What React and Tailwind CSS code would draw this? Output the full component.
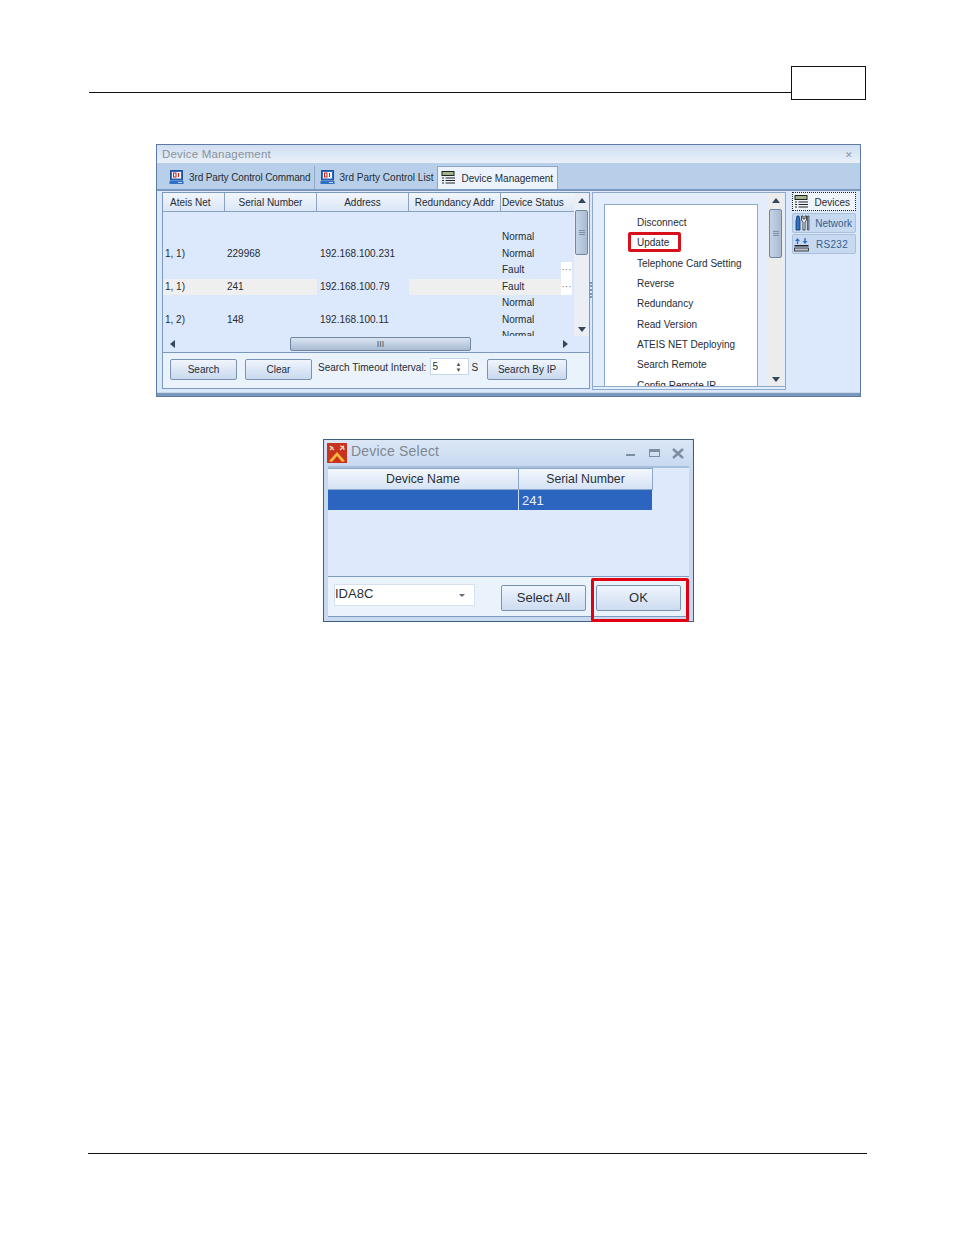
import React from 'react';

const rows = [
  { status: 'Normal' },
  { net: '1, 1)', serial: '229968', address: '192.168.100.231', status: 'Normal' },
  { status: 'Fault', dots: true },
  { net: '1, 1)', serial: '241', address: '192.168.100.79', status: 'Fault', dots: true, shaded: true },
  { status: 'Normal' },
  { net: '1, 2)', serial: '148', address: '192.168.100.11', status: 'Normal' },
  { status: 'Normal' },
];

const actions = ['Disconnect', 'Update', 'Telephone Card Setting', 'Reverse', 'Redundancy', 'Read Version', 'ATEIS NET Deploying', 'Search Remote', 'Config Remote IP'];

const ControlIcon = () => (
  <svg width="15" height="15" viewBox="0 0 15 15" className="shrink-0">
    <rect x="1.5" y="0.5" width="12" height="9.5" fill="#2f6fc4" stroke="#1c4f96" />
    <rect x="3" y="2" width="9" height="6.5" fill="#f4f4f4" />
    <rect x="4.5" y="3" width="2.5" height="4" fill="none" stroke="#d02020" />
    <rect x="9" y="3" width="1" height="4" fill="#d02020" />
    <rect x="0.5" y="11" width="14" height="3" fill="#2f6fc4" />
    <rect x="9" y="12" width="4" height="1" fill="#bcd6f5" />
  </svg>
);

const ListIcon = () => (
  <svg width="15" height="15" viewBox="0 0 15 15" className="shrink-0">
    <rect x="1" y="0.5" width="12" height="4" fill="#9fb48c" stroke="#222" />
    <path d="M1 7h2M1 9.5h2M1 12h2" stroke="#222" strokeWidth="1.2" />
    <path d="M4.5 7H14M4.5 9.5H14M4.5 12H14" stroke="#222" strokeWidth="1.2" />
  </svg>
);

const ToolsIcon = () => (
  <svg width="15" height="16" viewBox="0 0 15 16" className="shrink-0">
    <path d="M1 15V6L2 1h2l1 5v9z" fill="#2f6fc4" stroke="#12365f" strokeWidth="0.8" />
    <path d="M8 15V7L6.5 5V1h1.5v3h2V1h1.5v4L10 7v8z" fill="#eef3fa" stroke="#222" strokeWidth="0.8" />
    <path d="M12.5 1h1.5v14h-1.5z" fill="#9ab" stroke="#222" strokeWidth="0.6" />
  </svg>
);

const SerialIcon = () => (
  <svg width="15" height="15" viewBox="0 0 15 15" className="shrink-0">
    <path d="M3.5 1L1 4h1.8v3h1.4V4H6z" fill="#2f6fc4" />
    <path d="M11 7L8.5 4h1.8V1h1.4v3h1.8z" fill="#2f6fc4" />
    <rect x="0.5" y="8" width="14" height="1.5" fill="#222" />
    <rect x="0.5" y="11" width="14" height="3" fill="#b8c4d0" stroke="#222" strokeWidth="0.8" />
  </svg>
);

const Arrow = ({ dir }) => {
  const shapes = {
    up: 'border-x-[4px] border-b-[5px] border-x-transparent border-b-[#33475f]',
    down: 'border-x-[4px] border-t-[5px] border-x-transparent border-t-[#33475f]',
    left: 'border-y-[4px] border-r-[5px] border-y-transparent border-r-[#33475f]',
    right: 'border-y-[4px] border-l-[5px] border-y-transparent border-l-[#33475f]',
  };
  return <div className={`w-0 h-0 shrink-0 ${shapes[dir]}`} />;
};

const Grip = () => (
  <div className="flex flex-col gap-[1px]">
    <div className="w-[6px] h-[1px] bg-[#7f8fa5]" />
    <div className="w-[6px] h-[1px] bg-[#7f8fa5]" />
    <div className="w-[6px] h-[1px] bg-[#7f8fa5]" />
  </div>
);

const VScroll = ({ thumb, track }) => (
  <div className={`w-[15px] shrink-0 flex flex-col items-center ${track}`}>
    <div className="h-[15px] flex items-center justify-center shrink-0"><Arrow dir="up" /></div>
    <div className={`w-[13px] ${thumb} shrink-0 rounded-[2px] border border-[#71879f] bg-gradient-to-r from-[#c5d3e6] to-[#a9bbd2] flex items-center justify-center`}>
      <Grip />
    </div>
    <div className="flex-1" />
    <div className="h-[14px] flex items-center justify-center shrink-0"><Arrow dir="down" /></div>
  </div>
);

const SmallButton = ({ children, className }) => (
  <div className={`h-[21px] rounded-[2px] border border-[#7b93b3] bg-gradient-to-b from-[#f0f5fc] to-[#c9d9ef] flex items-center justify-center ${className}`}>
    {children}
  </div>
);

const TableRow = ({ row }) => (
  <div className="flex h-[16.5px] items-center leading-none">
    <div className={`w-[62px] h-full flex items-center pl-[2px] ${row.shaded ? 'bg-[#efefef]' : ''}`}>{row.net}</div>
    <div className={`w-[92px] h-full flex items-center pl-[2px] ${row.shaded ? 'bg-[#efefef]' : ''}`}>{row.serial}</div>
    <div className="w-[92px] h-full flex items-center pl-[3px]">{row.address}</div>
    <div className={`w-[92px] h-full ${row.shaded ? 'bg-[#efefef]' : ''}`} />
    <div className={`w-[60px] h-full flex items-center pl-[1px] ${row.shaded ? 'bg-[#efefef]' : ''}`}>{row.status}</div>
    <div className={`w-[11px] h-full flex items-center justify-center text-[#777] ${row.dots ? 'bg-white' : ''}`}>{row.dots ? '···' : ''}</div>
  </div>
);

const HeaderCell = ({ children, className }) => (
  <div className={`h-full flex items-center border-r border-[#8aa3c4] whitespace-nowrap overflow-hidden ${className}`}>
    {children}
  </div>
);

const DeviceManagement = () => (
  <div className="ml-[156px] mt-[44px] w-[705px] h-[253px] border border-[#5d7ba3] bg-[#dce8fb] flex flex-col text-[#262c34] text-[10px] font-['Liberation_Sans',sans-serif]">
    <div className="h-[18px] shrink-0 pl-[5px] pr-[5px] pt-[2px] flex items-center justify-between bg-gradient-to-b from-[#cfdff2] to-[#e9f0fa] text-[#8a929c] text-[11.5px] tracking-[0.2px]">
      <span>Device Management</span>
      <span className="text-[9px] leading-none mr-[2px]">✕</span>
    </div>
    <div className="h-[26px] shrink-0 bg-[#b8cfe9] pl-[12px] flex items-end">
      <div className="h-[23px] flex items-center gap-[5px] pr-[3px] border-r border-[#8ea6c4]">
        <ControlIcon /><span className="tracking-[-0.12px] whitespace-nowrap">3rd Party Control Command</span>
      </div>
      <div className="h-[23px] flex items-center gap-[5px] pl-[5px] pr-[4px]">
        <ControlIcon /><span className="whitespace-nowrap">3rd Party Control List</span>
      </div>
      <div className="h-[23px] w-[121px] flex items-center gap-[5px] pl-[3px] bg-[#edf3fc] border-x border-t border-[#8ea6c4]">
        <ListIcon /><span className="whitespace-nowrap">Device Management</span>
      </div>
    </div>
    <div className="h-[2px] shrink-0 bg-[#7c98bd]" />
    <div className="flex-1 min-h-0 flex pl-[5px] pt-[1px] bg-[#dce8fb]">
      <div className="w-[428px] h-[197px] border border-[#7b98be] flex flex-col bg-[#dce8fb]">
        <div className="flex-1 min-h-0 flex">
          <div className="flex-1 min-w-0 flex flex-col overflow-hidden">
            <div className="h-[19px] shrink-0 flex border-b border-[#8aa3c4] bg-gradient-to-b from-[#f2f6fc] to-[#dbe6f6]">
              <HeaderCell className="w-[62px] pl-[7px]">Ateis Net</HeaderCell>
              <HeaderCell className="w-[92px] justify-center">Serial Number</HeaderCell>
              <HeaderCell className="w-[92px] justify-center">Address</HeaderCell>
              <HeaderCell className="w-[92px] justify-center">Redundancy Addr</HeaderCell>
              <HeaderCell className="w-[71px] pl-[1px] border-r-0">Device Status</HeaderCell>
            </div>
            <div className="pt-[17px]">
              {rows.map((row, i) => <TableRow key={i} row={row} />)}
            </div>
          </div>
          <VScroll thumb="h-[45px] mt-[2px]" track="bg-[#ebeff5]" />
        </div>
        <div className="h-[16px] shrink-0 flex items-center pl-[7px] pr-[21px]">
          <Arrow dir="left" />
          <div className="ml-[115px] w-[181px] h-[14px] rounded-[2px] border border-[#71879f] bg-gradient-to-b from-[#dbe5f2] to-[#a9bbd2] flex items-center justify-center text-[#555] text-[9px] leading-none">III</div>
          <div className="flex-1" />
          <Arrow dir="right" />
        </div>
        <div className="h-[36px] shrink-0 border-t border-[#7b98be] bg-[#eaf2fc] flex items-center pl-[7px]">
          <SmallButton className="w-[67px] -mt-[2px]">Search</SmallButton>
          <SmallButton className="w-[67px] -mt-[2px] ml-[8px]">Clear</SmallButton>
          <span className="ml-[6px] -mt-[7px] whitespace-nowrap">Search Timeout Interval:</span>
          <div className="ml-[4px] -mt-[8px] w-[39px] h-[17px] bg-white border border-[#c5d5e8] flex items-center justify-between px-[1px] leading-none">
            <span>5</span>
            <span className="text-[6px] leading-[6px] mr-[6px] text-[#555] flex flex-col"><span>▲</span><span>▼</span></span>
          </div>
          <span className="ml-[2px] -mt-[7px]">S</span>
          <SmallButton className="w-[80px] ml-[9px] -mt-[2px]">Search By IP</SmallButton>
        </div>
      </div>
      <div className="w-[2px] shrink-0 mt-[90px] h-[16px] border-l-2 border-dotted border-[#7d95b5]" />
      <div className="w-[194px] h-[198px] border border-[#8fa9cb] pb-[2px] bg-[#e3edfc]">
        <div className="h-full flex pl-[11px] gap-[10px] border-b border-[#8fa9cb]">
          <div className="w-[154px] mt-[11px] relative border-x border-t border-[#8fa9cb] bg-white overflow-hidden pl-[32px] pt-[8px]">
            {actions.map((a) => (
              <div key={a} className="h-[20.3px] flex items-center whitespace-nowrap leading-none">{a}</div>
            ))}
            <div className="absolute left-[23px] top-[27px] w-[53px] h-[20px] border-[3px] border-[#d8101c] rounded-[2px]" />
          </div>
          <VScroll thumb="h-[49px] mt-[1px]" track="bg-[#ececec]" />
        </div>
      </div>
      <div className="flex-1 flex flex-col items-start pl-[6px]">
        <div className="w-[64px] h-[19px] flex items-center pl-[1px] pt-[1px] border border-dotted border-[#222] bg-[#f0f5fc]">
          <ListIcon /><span className="ml-auto mr-[5px]">Devices</span>
        </div>
        <div className="w-[64px] h-[20px] mt-[2px] flex items-center pl-[2px] border border-[#a9c0dd] rounded-[2px] bg-[#c6d9f1] text-[#34608f]">
          <ToolsIcon /><span className="ml-auto mr-[3px]">Network</span>
        </div>
        <div className="w-[64px] h-[20px] mt-[1px] flex items-center pl-[1px] border border-[#a9c0dd] rounded-[2px] bg-[#c6d9f1] text-[#34608f]">
          <SerialIcon /><span className="ml-auto mr-[7px] tracking-[0.3px]">RS232</span>
        </div>
      </div>
    </div>
    <div className="h-[4px] shrink-0 bg-[#7c98bd] border-t border-[#c9d9ee]" />
  </div>
);

const DeviceSelect = () => (
  <div className="ml-[323px] mt-[42px] w-[371px] h-[183px] border border-[#3f5f80] bg-[#c9daf0] px-[4px] pb-[4px] flex flex-col text-[#2a2f36] text-[12.3px] font-['Liberation_Sans',sans-serif] relative">
    <div className="h-[26px] -mx-[3px] shrink-0 flex items-center bg-gradient-to-b from-[#dbe7f6] to-[#c8daf0]">
      <svg width="20" height="20" viewBox="0 0 20 20" className="ml-[2px] shrink-0">
        <rect width="20" height="20" fill="#c8321e" />
        <path d="M2 18L10 9l8 9-3 1-5-6-5 6z" fill="#f6b73c" />
        <path d="M3 3l4 4M3 7l3-3M17 3l-4 4M13 3c3 0 4 1 4 4" stroke="#f4e7d0" strokeWidth="1.2" fill="none" />
      </svg>
      <span className="ml-[4px] -mt-[3px] text-[#7f8792] text-[14px] tracking-[0.2px]">Device Select</span>
      <div className="ml-auto flex items-center mr-[8px]">
        <div className="w-[9px] h-[2px] mt-[4px] bg-[#7d8ea3]" />
        <div className="w-[11px] h-[8px] ml-[14px] border border-[#7d8ea3] border-t-[3px]" />
        <svg width="12" height="11" viewBox="0 0 12 11" className="ml-[12px]">
          <path d="M1 1l10 9M11 1L1 10" stroke="#7d8ea3" strokeWidth="2.4" />
        </svg>
      </div>
    </div>
    <div className="flex-1 min-h-0 bg-[#deeafb] border-t-2 border-[#a9c0dd]">
      <div className="h-[22px] w-[325px] flex border-y border-r border-[#8ba6c9] bg-gradient-to-b from-[#f3f7fd] to-[#d6e3f5]">
        <div className="w-[191px] flex items-center justify-center border-r border-[#8ba6c9]">Device Name</div>
        <div className="flex-1 flex items-center justify-center">Serial Number</div>
      </div>
      <div className="h-[20px] w-[324px] flex bg-[#2b65c0] text-[#e8f0fb]">
        <div className="w-[191px] border-r border-[#cfe0f5]" />
        <div className="pl-[3px] pt-[1px] flex items-center text-[13px]">241</div>
      </div>
    </div>
    <div className="h-[41px] shrink-0 border-y border-[#7e9cc2] bg-[#eaf2fc] flex pl-[6px] text-[13px]">
      <div className="mt-[7px] w-[141px] h-[22px] bg-white border border-[#d5e1f0] flex items-center justify-between pr-[9px]">
        <span className="-mt-[2px]">IDA8C</span>
        <div className="w-0 h-0 border-x-[3px] border-t-[3px] border-x-transparent border-t-[#667]" />
      </div>
      <div className="ml-[26px] mt-[8px] w-[85px] h-[26px] pb-[1px] rounded-[2px] border border-[#7b93b3] bg-gradient-to-b from-[#f0f5fc] to-[#cddcf1] flex items-center justify-center">Select All</div>
      <div className="ml-[10px] mt-[8px] w-[85px] h-[26px] pb-[1px] rounded-[2px] border border-[#7b93b3] bg-gradient-to-b from-[#f0f5fc] to-[#cddcf1] flex items-center justify-center">OK</div>
    </div>
    {/* red marker over the OK button */}
    <div className="absolute left-[267px] top-[138px] w-[98px] h-[44px] border-[3px] border-[#e00012] rounded-[2px]" />
  </div>
);

export default function App() {
  return (
    <div className="w-[954px] h-[1235px] bg-white flex flex-col pt-[66px]">
      <div className="ml-[89px] w-[777px] flex items-start shrink-0">
        <div className="flex-1 h-[27px] border-b border-[#111]" />
        <div className="w-[75px] h-[34px] border border-[#111]" />
      </div>
      <DeviceManagement />
      <DeviceSelect />
      <div className="ml-[88px] mt-[531px] w-[779px] border-t border-[#111]" />
    </div>
  );
}
